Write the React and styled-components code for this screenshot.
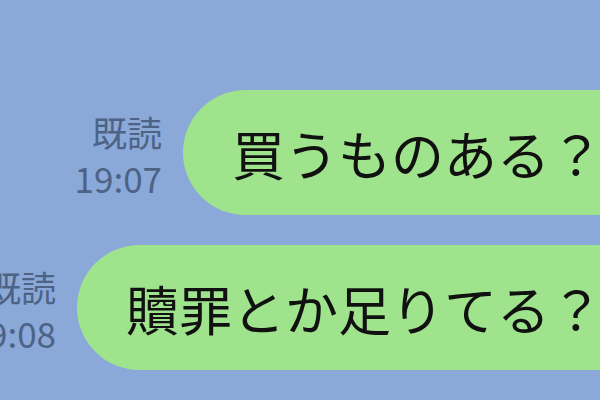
import React from "react";
import styled, { createGlobalStyle } from "styled-components";

const GlobalStyle = createGlobalStyle`
  html, body {
    margin: 0;
    padding: 0;
    background: #8aa9d8;
  }
`;

const messages = [
  { id: 1, text: "買うものある？", time: "19:07" },
  { id: 2, text: "贖罪とか足りてる？", time: "19:08" },
];

export default function App() {
  return (
    <>
      <GlobalStyle />
      <ChatContainer>
        {messages.map((m) => (
          <MessageRow key={m.id}>
            <MessageMeta>
              <ReadLabel>既読</ReadLabel>
              <TimeLabel>{m.time}</TimeLabel>
            </MessageMeta>
            <Bubble>{m.text}</Bubble>
          </MessageRow>
        ))}
      </ChatContainer>
    </>
  );
}

const ChatContainer = styled.div`
  width: 600px;
  height: 400px;
  overflow: hidden;
  background: #8aa9d8;
  display: flex;
  flex-direction: column;
  gap: 30px;
  padding-top: 90px;
  box-sizing: border-box;
  font-family: "Noto Sans CJK JP", "Noto Sans", sans-serif;
`;

const MessageRow = styled.div`
  display: flex;
  justify-content: flex-end;
  align-items: flex-end;
  gap: 21px;
`;

const MessageMeta = styled.div`
  display: flex;
  flex-direction: column;
  align-items: flex-end;
  flex-shrink: 0;
  margin-bottom: 14px;
  color: #4d6385;
  font-size: 35px;
  line-height: 46px;
  white-space: nowrap;
`;

const ReadLabel = styled.span``;

const TimeLabel = styled.span``;

const Bubble = styled.div`
  flex-shrink: 0;
  height: 125px;
  display: flex;
  align-items: center;
  box-sizing: border-box;
  padding: 0 0 0 49px;
  margin-right: -3px;
  background: #9fe48c;
  border-radius: 63px 0 0 63px;
  color: #111;
  font-size: 53px;
  white-space: nowrap;
`;
